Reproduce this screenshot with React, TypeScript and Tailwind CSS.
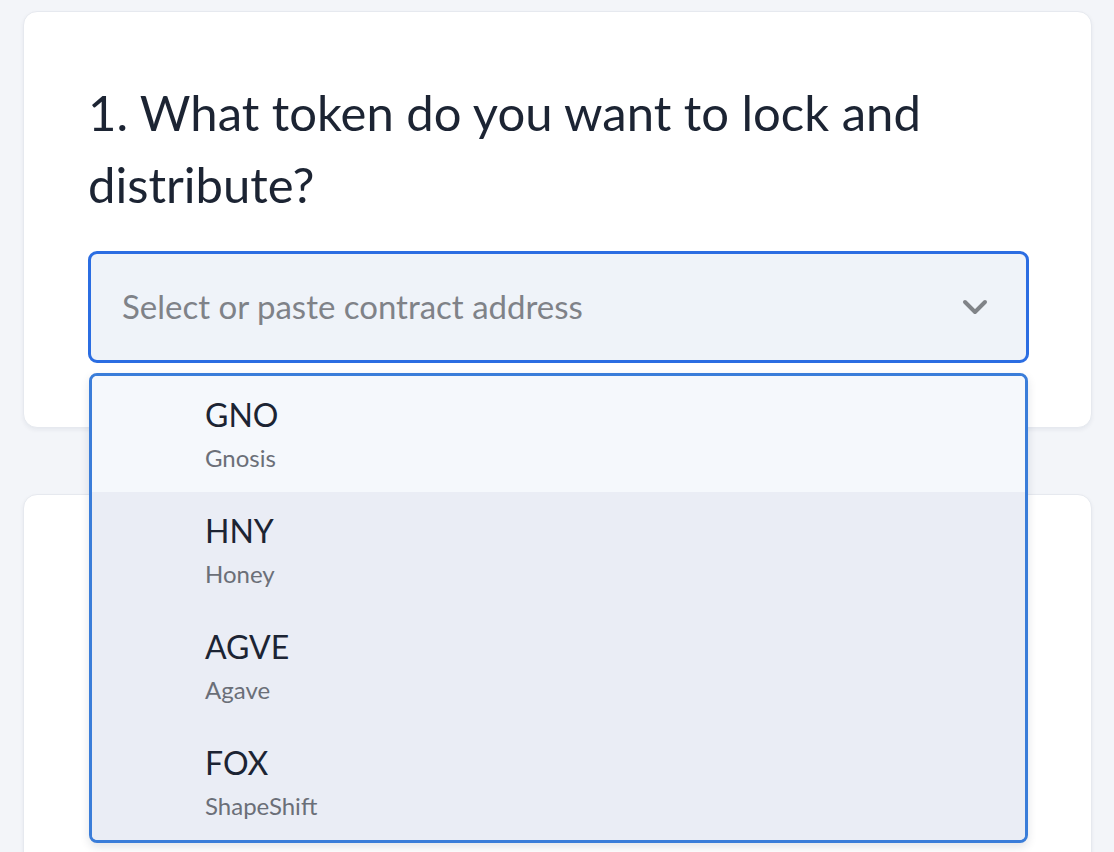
import React from "react";

const tokens = [
  { sym: "GNO", name: "Gnosis", active: true },
  { sym: "HNY", name: "Honey", active: false },
  { sym: "AGVE", name: "Agave", active: false },
  { sym: "FOX", name: "ShapeShift", active: false },
];

export default function App() {
  return (
    <div
      className="min-h-[852px] h-[852px] overflow-hidden bg-[#f3f5f9] pl-[23px] pr-[22px] pt-[11px]"
      style={{ fontFamily: "Lato, 'Noto Sans', sans-serif" }}
    >
      <div className="relative rounded-[14px] border border-[#e6e9ef] bg-white pl-[64px] pr-[62px] pt-[64px] pb-[64px] shadow-[0_2px_4px_rgba(20,30,60,0.06)]">
        <h1 className="text-[49px] leading-[72px] font-normal text-[#1c2433]">
          1. What token do you want to lock and distribute?
        </h1>
        <div className="relative mt-[31px]">
          <div className="flex h-[112px] items-center justify-between rounded-[9px] border-[3px] border-[#2b6de2] bg-[#eff3f9] pl-[31px] pr-[38px]">
            <span className="text-[33px] text-[#7f8288]">Select or paste contract address</span>
            <svg width="26" height="18" viewBox="0 0 26 18" fill="none">
              <polyline
                points="3,4 13,14 23,4"
                stroke="#808388"
                strokeWidth="4"
                strokeLinecap="round"
                strokeLinejoin="round"
              />
            </svg>
          </div>
          <div className="absolute left-[1px] right-[1px] top-[122px] z-10 overflow-hidden rounded-[8px] border-[3px] border-[#3a7dd9] bg-[#eaedf5] shadow-[0_4px_10px_rgba(20,30,60,0.12)]">
            {tokens.map((t) => (
              <div
                key={t.sym}
                className={`flex h-[116px] flex-col justify-center pl-[113px] ${
                  t.active ? "bg-[#f5f8fc]" : "bg-[#eaedf5]"
                }`}
              >
                <div className="text-[32px] leading-[40px] text-[#1c2433]">{t.sym}</div>
                <div className="mt-[7px] text-[24px] leading-[32px] text-[#6b6f78]">{t.name}</div>
              </div>
            ))}
          </div>
        </div>
      </div>
      <div className="mt-[66px] h-[400px] rounded-[14px] border border-[#e6e9ef] bg-white shadow-[0_2px_4px_rgba(20,30,60,0.06)]" />
    </div>
  );
}
